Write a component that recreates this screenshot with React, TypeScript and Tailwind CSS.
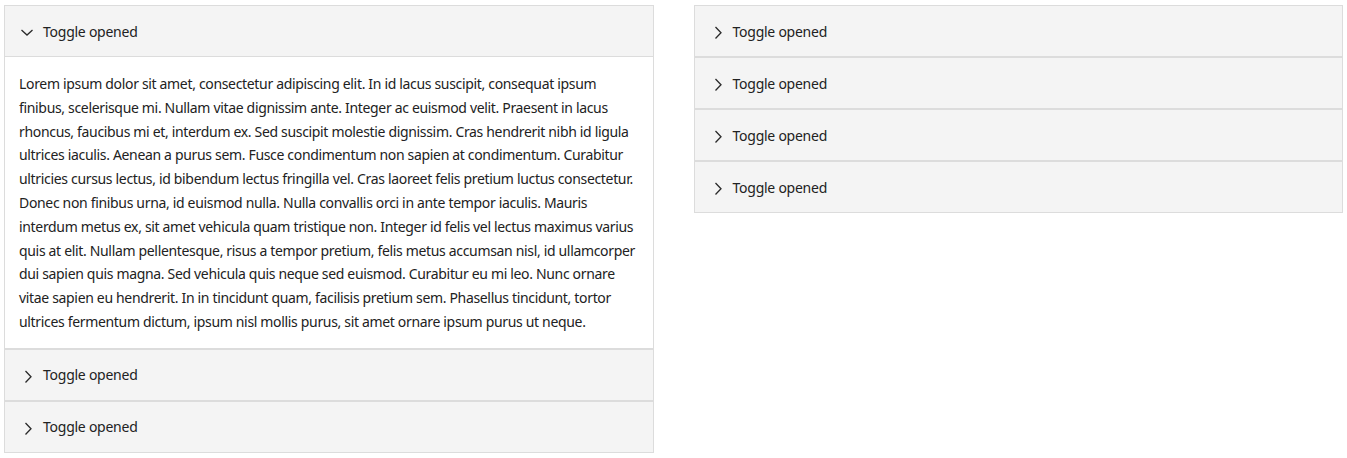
import { useState } from "react";

const lorem =
  "Lorem ipsum dolor sit amet, consectetur adipiscing elit. In id lacus suscipit, consequat ipsum finibus, scelerisque mi. Nullam vitae dignissim ante. Integer ac euismod velit. Praesent in lacus rhoncus, faucibus mi et, interdum ex. Sed suscipit molestie dignissim. Cras hendrerit nibh id ligula ultrices iaculis. Aenean a purus sem. Fusce condimentum non sapien at condimentum. Curabitur ultricies cursus lectus, id bibendum lectus fringilla vel. Cras laoreet felis pretium luctus consectetur. Donec non finibus urna, id euismod nulla. Nulla convallis orci in ante tempor iaculis. Mauris interdum metus ex, sit amet vehicula quam tristique non. Integer id felis vel lectus maximus varius quis at elit. Nullam pellentesque, risus a tempor pretium, felis metus accumsan nisl, id ullamcorper dui sapien quis magna. Sed vehicula quis neque sed euismod. Curabitur eu mi leo. Nunc ornare vitae sapien eu hendrerit. In in tincidunt quam, facilisis pretium sem. Phasellus tincidunt, tortor ultrices fermentum dictum, ipsum nisl mollis purus, sit amet ornare ipsum purus ut neque.";

function Chevron({ open }: { open: boolean }) {
  return (
    <svg
      className="h-4 w-3 shrink-0 text-[#2a2a2a]"
      fill="none"
      stroke="currentColor"
      strokeWidth={1.3}
      viewBox="0 0 12 16"
    >
      {open ? <path d="M0.5 7 6 12 11.5 7" /> : <path d="M4.5 4 10 9.75 4.5 15.5" />}
    </svg>
  );
}

function Toggle({ defaultOpen = false }: { defaultOpen?: boolean }) {
  const [open, setOpen] = useState(defaultOpen);
  return (
    <div className="border border-[#dcdcdc]">
      <button
        className="flex h-[50px] w-full items-center gap-[10px] bg-[#f4f4f4] pl-[16px] pr-[14px] text-left text-[14px] tracking-[-0.25px] text-[#222]"
        onClick={() => setOpen(!open)}
        type="button"
      >
        <Chevron open={open} />
        <span>Toggle opened</span>
      </button>
      {open && (
        <div className="border-t border-[#dcdcdc] bg-white px-[14px] pt-[15px] pb-[14px] text-[14px] leading-[23.8px] tracking-[-0.33px] text-[#222]">
          {lorem}
        </div>
      )}
    </div>
  );
}

export default function App() {
  return (
    <div className="grid grid-cols-2 items-start gap-[40px] px-[4px] pt-[5px] font-['Noto_Sans',sans-serif]">
      <div>
        <Toggle defaultOpen />
        <Toggle />
        <Toggle />
      </div>
      <div>
        <Toggle />
        <Toggle />
        <Toggle />
        <Toggle />
      </div>
    </div>
  );
}
